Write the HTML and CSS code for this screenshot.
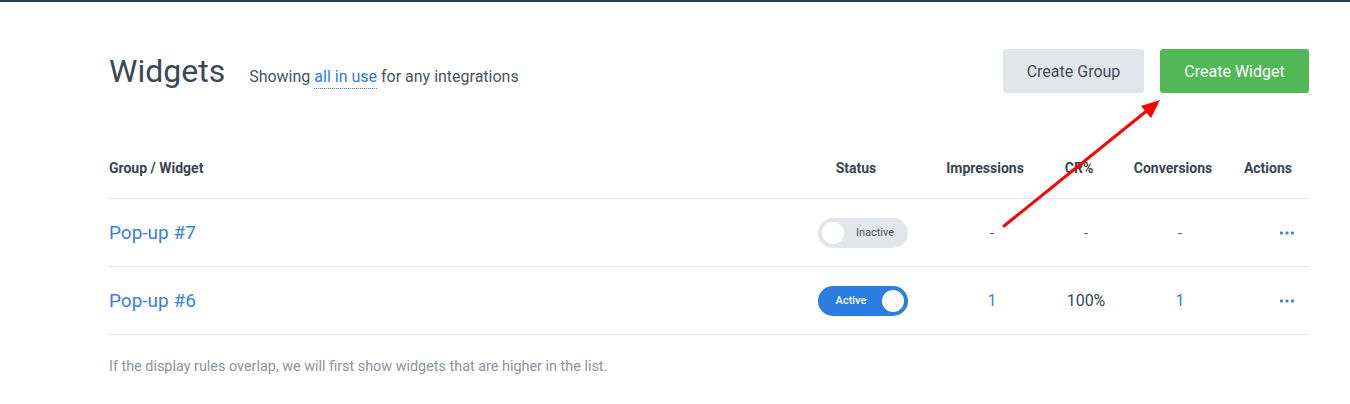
FILE: index.html
```html
<!DOCTYPE html>
<html>
<head>
<meta charset="utf-8">
<link rel="stylesheet" href="styles.css">
</head>
<body>
<div class="page">
  <div class="topbar">
    <div class="title-group">
      <h1 class="title">Widgets</h1>
      <div class="subtitle">Showing <span class="filter">all in use</span> for any integrations</div>
    </div>
    <div class="buttons">
      <button class="btn btn-gray">Create Group</button>
      <button class="btn btn-green">Create Widget</button>
    </div>
  </div>

  <div class="table">
    <div class="row head">
      <div class="cell name">Group / Widget</div>
      <div class="cell c">Status</div>
      <div class="cell c">Impressions</div>
      <div class="cell c">CR%</div>
      <div class="cell c">Conversions</div>
      <div class="cell act">Actions</div>
    </div>
    <div class="row">
      <div class="cell name"><a class="link">Pop-up #7</a></div>
      <div class="cell c"><span class="toggle off"><span class="knob"></span><span class="tlabel">Inactive</span></span></div>
      <div class="cell c dash">-</div>
      <div class="cell c dash">-</div>
      <div class="cell c dash">-</div>
      <div class="cell act"><svg class="dots" width="14" height="4" viewBox="0 0 14 4"><rect x="0" y="0.5" width="3" height="3" rx="1"/><rect x="5.5" y="0.5" width="3" height="3" rx="1"/><rect x="11" y="0.5" width="3" height="3" rx="1"/></svg></div>
    </div>
    <div class="row">
      <div class="cell name"><a class="link">Pop-up #6</a></div>
      <div class="cell c"><span class="toggle on"><span class="tlabel">Active</span><span class="knob"></span></span></div>
      <div class="cell c num blue">1</div>
      <div class="cell c num">100%</div>
      <div class="cell c num blue">1</div>
      <div class="cell act"><svg class="dots" width="14" height="4" viewBox="0 0 14 4"><rect x="0" y="0.5" width="3" height="3" rx="1"/><rect x="5.5" y="0.5" width="3" height="3" rx="1"/><rect x="11" y="0.5" width="3" height="3" rx="1"/></svg></div>
    </div>
  </div>
  <p class="note">If the display rules overlap, we will first show widgets that are higher in the list.</p>
</div>
<svg class="arrow" width="1350" height="404" viewBox="0 0 1350 404">
  <line x1="1004" y1="226" x2="1149" y2="109" stroke="#ff0000" stroke-width="3" stroke-linecap="round"/>
  <polygon points="1160,100 1141,106 1151,118" fill="#ff0000"/>
</svg>
</body>
</html>
```
FILE: styles.css
```css
* { box-sizing: border-box; }
html, body { margin: 0; padding: 0; }
body {
  font-family: Roboto, "Liberation Sans", sans-serif;
  background: #ffffff;
  border-top: 2px solid #2c3e50;
  position: relative;
  min-height: 404px;
}
.page {
  padding: 47px 41px 0 109px;
}
.topbar {
  display: flex;
  justify-content: space-between;
  align-items: center;
  height: 44px;
}
.title-group {
  display: flex;
  align-items: baseline;
  gap: 24px;
  padding-top: 0;
}
.title {
  margin: 0;
  font-size: 32px;
  font-weight: 400;
  color: #3a4757;
  line-height: 1;
}
.subtitle {
  font-size: 16px;
  color: #4a5360;
}
.filter {
  color: #2f7de1;
  border-bottom: 1px dotted #2f7de1;
  padding-bottom: 2px;
}
.buttons {
  display: flex;
  gap: 16px;
}
.btn {
  font-family: inherit;
  font-size: 16px;
  height: 44px;
  border: none;
  border-radius: 3px;
  padding: 0 12px;
  white-space: nowrap;
}
.btn-gray {
  background: #e2e5e9;
  color: #3d4b5c;
  width: 141px;
}
.btn-green {
  background: #52b755;
  color: #ffffff;
  width: 149px;
}
.table {
  margin-top: 45px;
}
.row {
  display: grid;
  grid-template-columns: 1fr 164px 94px 94px 94px 82px;
  align-items: center;
  height: 68px;
  border-bottom: 1px solid #e3e6ea;
}
.row.head {
  height: 61px;
  font-size: 14px;
  font-weight: 700;
  color: #3a4450;
}
.row.head .c {
  padding-right: 14px;
}
.row.head .act {
  padding-right: 17px;
}
.cell.c { text-align: center; }
.cell.act {
  text-align: right;
  padding-right: 15px;
  display: flex;
  justify-content: flex-end;
}
.link {
  font-size: 19px;
  color: #3b7de8;
  cursor: pointer;
}
.dash { color: #4a5360; font-size: 14px; }
.num { font-size: 16px; color: #3a4450; }
.num.blue { color: #3b7de8; }
.dots { fill: #3b7de8; display: block; }
.toggle {
  display: inline-flex;
  align-items: center;
  width: 90px;
  height: 30px;
  border-radius: 15px;
  padding: 0 4px;
  font-size: 11px;
  vertical-align: middle;
}
.toggle .knob {
  width: 22px;
  height: 22px;
  border-radius: 50%;
  background: #ffffff;
  flex: none;
}
.toggle .tlabel { flex: 1; text-align: center; }
.toggle.off { background: #e2e5e9; color: #4a5360; }
.toggle.off .tlabel { padding-left: 2px; }
.toggle.on { background: #2a7de1; color: #ffffff; font-weight: 500; }
.toggle.on .tlabel { padding-right: 2px; }
.note {
  margin: 23px 0 0 0;
  font-size: 14.4px;
  color: #8c939d;
}
.arrow {
  position: absolute;
  left: 0;
  top: -2px;
  pointer-events: none;
}
```
